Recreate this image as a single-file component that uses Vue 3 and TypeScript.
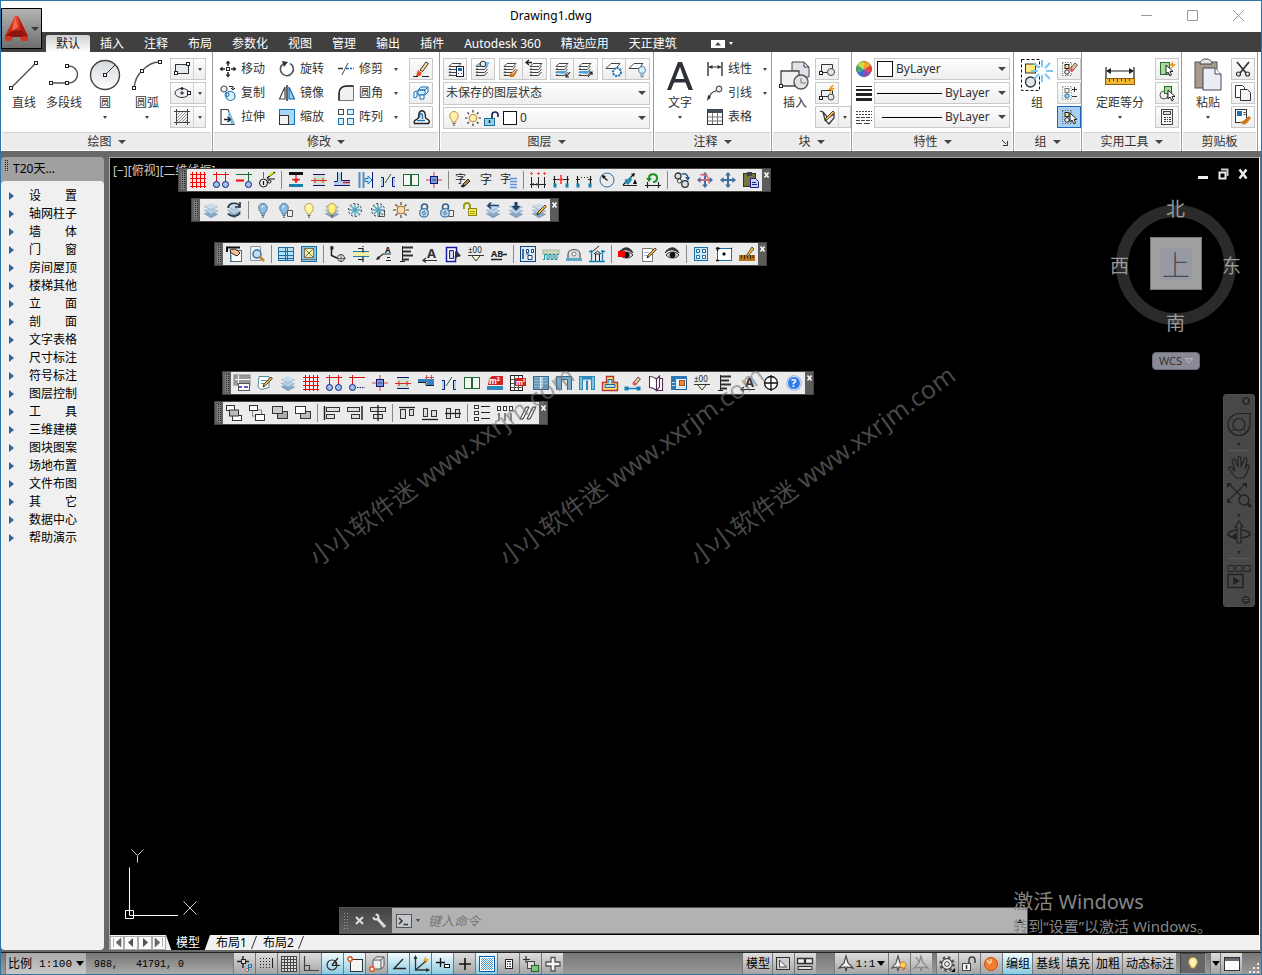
<script setup lang="ts">
import { h, ref } from 'vue'

const P = (d: string, s = '#333', f = 'none', w = 1) =>
  `<path d="${d}" stroke="${s}" fill="${f}" stroke-width="${w}"/>`
const F = (d: string, f = '#333') => `<path d="${d}" fill="${f}"/>`
const C = (x: number, y: number, r: number, s = '#333', f = 'none', w = 1) =>
  `<circle cx="${x}" cy="${y}" r="${r}" stroke="${s}" fill="${f}" stroke-width="${w}"/>`
const R = (x: number, y: number, w: number, hh: number, s = '#333', f = 'none') =>
  `<rect x="${x}" y="${y}" width="${w}" height="${hh}" stroke="${s}" fill="${f}"/>`
const T = (x: number, y: number, t: string, size = 12, f = '#222', wt = 400) =>
  `<text x="${x}" y="${y}" font-size="${size}" font-weight="${wt}" fill="${f}">${t}</text>`
const H = (x: number, y: number) => R(x - 1.5, y - 1.5, 3, 3, '#222', '#fff')

const navy = '#141478'
const sky = '#a9d4f5'
const stack = (a = '#b7cfe3', b = '#8aa9c6') =>
  F('M1 11.5l7-2.5 7 3-7 4z', b) + P('M1 11.5l7 4 7-3.5', '#6f8dab', 'none', 0.6) +
  F('M1 8l7-2.5 7 3-7 4z', a) + P('M1 8l7 4.5 7-4', '#6f8dab', 'none', 0.6) +
  F('M1 4l7-3 7 3.5-7 4z', '#c9dcec') + P('M1 4l7 4 7-3.5', '#7d9ab6', 'none', 0.6)
const bulb = (f: string, s: string, x = 0) =>
  `<g transform="translate(${x} 0)">` + P('M6 10.5C2.5 8 3 1.5 8 1.5s5.5 6.5 2 9v1.5H6z', s, f) +
  P('M6.5 13.5h3M7 15.2h2', '#667', 'none', 1.2) + F('M6.5 4.5l1.5-1v3z', '#fff') + '</g>'
const sheets = (x = 0) =>
  `<g transform="translate(${x} 0)">` + P('M5 2.5h9l-3 3H2z', '#444', '#fff') +
  P('M3.5 7l-1.500 1.500h8.500l3-3.500M3.5 10l-1.500 1.500h8.500l3-3.500M3.5 13l-1.500 1.500h8.500l3-3.500', '#444') + '</g>'
const flake = (c = '#5aa5c0') =>
  P('M8 2v12M2 8h12M3.8 3.8l8.4 8.4M12.2 3.8l-8.4 8.4', c, 'none', 1.4) +
  `<circle cx="8" cy="8" r="6.5" fill="none" stroke="#333" stroke-dasharray="2 2"/>`
const lockA = C(8.5, 5, 3, '#345f8c', 'none', 1.6) + P('M4 9c0-3 8-3 8 0 1 5-1 6-4 6s-5-1-4-6z', '#345f8c', '#b5d5f0') + P('M6 11l3-2M7 13l3-2', '#345f8c')
const page = P('M9.5 8.5h5v6h-5z', '#555', '#eee')
const eye = P('M2 9c3-4 10-4 13 0-3 4-10 4-13 0z', '#333', '#ccc') + C(8.5, 9, 2.5, '#000', '#111') + P('M1 7c4-5 11-4 14 0M2 5c4-3 9-3 12 0M4 3.5c3-2 6-2 8 0', '#333', 'none', 1.2)
const pencil = P('M6 12l1-3 7-7 1.5 1.5-7 7z', '#543', '#f0b83c') + F('M6 12l.7-2 1.300 1.300z', '#222')
const eraser = P('M8 8l5-6 2.5 2-5 6z', '#654', '#e8c49a') + F('M7 9l2-2.5 3 2.5-2 2z', '#e55')
const arrow4 = (c: string) => P('M8 2.5v11M2.5 8h11', c, 'none', 2) +
  F('M8 0l3 3.5H5zM8 16l3-3.5H5zM0 8l3.5-3v6zM16 8l-3.5-3v6z', c)
const win = (c = '#1d6ea3') => R(1.5, 1.5, 13, 13, c, '#cfe9f8')
const cursorP = (x: number, y: number) =>
  `<g transform="translate(${x} ${y})">` + P('M0 0v9l2-2 2 4 1.5-1-1.500-3.500h3z', '#222', '#fff') + '</g>'
const selBox = `<rect x="1.5" y="1.5" width="9" height="13" fill="none" stroke="#555" stroke-dasharray="1 1.5"/>` + R(4, 3.5, 4, 4, '#222', '#ffe48a') + C(6, 11, 2.2, '#222', '#fff')

const icons: Record<string, string> = {
  line: P('M5 29L29 5', '#555', 'none', 1.5) + H(29, 5) + H(4, 30),
  pline: P('M4 25h18a8.5 8.5 0 0 0 0-17h-2', '#555', 'none', 1.5) + H(4, 25) + H(20, 25) + H(20, 8),
  circle: C(17, 17, 14.5, '#444', 'url(#ball)', 1.4) + P('M17 17L27 7', '#333') + H(17, 17),
  arc: P('M4 30C5 22 7 17 12 13 17 7 23 4 30 4', '#555', 'none', 1.5) + H(4, 30) + H(12, 13) + H(30, 4),
  rectI: R(1.5, 3.5, 13, 9, '#333', '#e6e9ee') + H(14, 3) + H(2, 12),
  ellipse: `<ellipse cx="8" cy="8" rx="7" ry="4.5" fill="#eceff3" stroke="#333"/>` + P('M6 8h4M8 6v4', '#222') + H(15, 8) + C(8, 3.5, 1, '#222', '#222'),
  hatch: P('M2.5 0v16M13.5 0v16M0 2.5h16M0 13.5h16', '#444') + P('M3 6l3-3M3 9l6-6M3 12l9-9M5 13l8-8M8 13l5-5M11 13l2-2', '#777', 'none', .8),
  move: P('M8 1v4M8 11v4M1 8h4M11 8h4', '#222', 'none', 1.5) + F('M8-.5l2.5 3h-5zM8 16.5l2.5-3h-5zM-.5 8l3-2.5v5zM16.5 8l-3-2.5v5z', '#222') + R(6.5, 6.5, 3, 3, '#222', '#fff'),
  rotate: P('M11 2.500a6.500 6.500 0 1 1-7 .500', '#555', 'none', 1.6) + F('M3 0l6 1-4 5z', '#333'),
  trim: P('M8 7.5h8', '#0b6ab8', 'none', 1.5) + F('M11 6h1v3h-1zM14 6h1v3h-1z', '#fff') + P('M4 14l6-12', '#444') + P('M0 7.5h5', '#333', 'none', 1.5),
  copy: C(4, 4, 3, '#555', '#f3f3f3', 1.2) + C(10.5, 11, 4.5, '#1673b5', '#dff0fb', 1.2) + P('M9 1.5h4v3M11 3l2 2 2-2', '#222') + C(7, 9.5, 2, '#1673b5'),
  mirror: P('M6 2v12H.5z', '#444', '#fff', 1.2) + P('M10 2v12h5.5z', '#0b6ab8', '#9fd0f2', 1.2) + P('M8 0v16', '#222', 'none', 1.4),
  fillet: P('M1 15.5V9Q1 1 9 1h6.5v14.5z', '#777', '#eef0f2') + P('M1 15.5V9Q1 1 9 1h6.5', '#222', 'none', 1.5),
  stretch: P('M1 .5h7l6 15H1z', '#444', '#fff', 1.2) + F('M9 1l6 14h-4L8 6z', '#7cc0ea') + P('M4 10.5h6M7.5 8l3 2.5-3 2.5', '#222', 'none', 1.4),
  scale: R(.5, .5, 15, 15, '#1673b5', '#a8d8f4') + R(.5, 6.5, 9, 9, '#333', '#f3f3f3'),
  array: R(.5, .5, 5, 5, '#444', '#fff') + R(9.5, .5, 6, 5, '#1673b5', '#d8eefb') + R(.5, 9.5, 5, 6, '#1673b5', '#d8eefb') + R(9.5, 9.5, 6, 6, '#1673b5', '#d8eefb'),
  brush: P('M7 9l6-8 2.5 1.5-6 8z', '#432', '#f3d9a2') + F('M5 9l4 3-2 3H3z', '#e2521c') + P('M0 15.5h5M9 15.5h7', '#222'),
  explode: P('M5 5l3-3h7l-3 3zM5 5h7v5H5zM15 2v5l-3 3', '#1673b5', '#d8eefb') + P('M1 7l3-1v6l-3 1zM7 10h4v4H7z', '#1673b5', '#fff'),
  offset: P('M1.500 14.500c-2-4 4-4 4-6 0-9 7-9 7 0 0 2 6 2 3 6z', '#222', '#fff', 1.4) + P('M4 11.5h8M6.5 9V7c0-3 3-3 3 0v3', '#1673b5', 'none', 1.5),
  layProp: sheets() + R(9.5, 5.5, 7, 10, '#223', '#fff') + F('M11 7h4v3h-4zM11 12h1v1h-1zM14 12h1v1h-1z', '#0b6ab8'),
  layOff: sheets() + F('M3 5l4-4h9l-3 5z', '#7cc0ea') + C(9, 3, 2.8, '#333', '#dff0fb'),
  layPaint: sheets() + F('M8 12l3 1 4-5 1 1-3 5c-1 3-4 2-5 2z', '#d07820'),
  layPrev: sheets(2) + P('M0 1.5h6M3-1L0 1.5 3 4', '#222', 'none', 1.3),
  layIso: sheets() + F('M2 12l2-2h9l-3 3z', '#4aa3dc') + P('M16 11l-4 5M12 13v3h3', '#222', 'none', 1.2),
  layUn: sheets() + F('M2 12l2-2h9l-3 3z', '#4aa3dc') + P('M11 16l4-5M12 11h3v3', '#222', 'none', 1.2),
  layFrz: P('M5 2.5h9l-4 5H0z', '#444', '#fff') + `<circle cx="11" cy="11" r="4" fill="#d8eefb" stroke="#1673b5" stroke-width="2" stroke-dasharray="2 1"/>` + C(11, 11, 2, '#fff', '#fff'),
  layBulb: P('M5 2.5h9l-4 5H0z', '#444', '#fff') + C(13, 9, 3.5, '#5c87a8', '#d8eefb') + P('M12 13v3h2v-3', '#5c87a8'),
  bulbY: bulb('#ffeeaa', '#b89a3e'),
  sunY: C(8, 8, 3.8, '#a8872c', '#ffeeb0') + P('M8 0v2.5M8 13.5V16M0 8h2.5M13.5 8H16M2.5 2.5l1.5 1.5M12 12l1.5 1.5M13.5 2.5L12 4M4 12l-1.500 1.500', '#333', 'none', 1.2),
  unlock: R(.5, 8.5, 10, 7, '#1f6f95', '#8fd0ea') + P('M8 8V5c0-4 6-4 6 0v2', '#225', 'none', 1.7) + P('M5.5 10v3', '#123', 'none', 1.5),
  textA: F('M1 32L12 4h4l11 28h-4.500l-3-7.500H8L5 32zM9.300 21h9L14 9z', '#2e3238'),
  dim: P('M1 1v14M15 1v14', '#333', 'none', 1.4) + P('M2 6h12', '#333') + F('M1.5 6l4-2v4zM14.5 6l-4-2v4z', '#333'),
  leader: P('M2 14Q3 7 9 6', '#333', 'none', 1.2) + C(12, 4, 2.8, '#555', '#eee', 1.2) + F('M0 16l1-6 3 2z', '#333'),
  table: R(.5, .5, 15, 15, '#333', '#fff') + F('M0 0h16v4H0z', '#444b55') + P('M1 8h14M1 12h14M5.5 4v11M10.5 4v11', '#777'),
  insert: P('M14 4h12l5 5v10H14z', '#444', '#dfe3e8') + P('M26 4v5h5', '#444') + P('M3 13h18v15H3z', '#444', '#eef0f2', 1.3) + C(23, 24, 7, '#555', '#dfe2e6', 1.4) + P('M23 20v5h5', '#777') + H(3, 28),
  blkNew: P('M2.5 3.5h11v8h-11z', '#333', '#eef0f2') + C(12, 11, 3.5, '#444', '#e4e7ea') + H(2, 12),
  blkEdit: P('M2.5 5.5h11v6h-11z', '#333', '#eef0f2') + C(12, 12, 3, '#444', '#e4e7ea') + F('M13 0l-4 5h3l-2 4 6-6h-3l2-3z', '#f39a1f') + H(2, 13),
  blkAttr: P('M1 2l3 1 2 8 4 4 5-6V5L9 9 4 3', '#333', '#eef0f2', 1.2) + pencil,
  wheel: C(8, 8, 7.5, '#555', '#fff') + F('M8 8V.5a7.5 7.5 0 0 1 6.500 3.700z', '#f5a623') + F('M8 8l6.500-3.800a7.500 7.500 0 0 1 0 7.500z', '#e8432e') + F('M8 8l6.500 3.700A7.500 7.500 0 0 1 8 15.500z', '#8c4bb5') + F('M8 8v7.500a7.500 7.500 0 0 1-6.500-3.800z', '#3b6fd4') + F('M8 8l-6.500 3.700a7.500 7.500 0 0 1 0-7.500z', '#3aae62') + F('M8 8L1.500 4.200A7.500 7.500 0 0 1 8 .500z', '#c9d83e'),
  weight: F('M0 1h16v1H0zM0 4h16v2H0zM0 8h16v3H0zM0 13h16v3H0z', '#222'),
  ltype: `<path d="M0 2.5h16M0 5.5h16" stroke="#444" stroke-dasharray="2 1"/><path d="M0 8.5h16M0 11.5h16" stroke="#444" stroke-dasharray="4 1"/><path d="M0 14.5h16" stroke="#444" stroke-dasharray="6 2"/>`,
  group: `<rect x="1.5" y="1.5" width="18" height="31" fill="none" stroke="#111" stroke-dasharray="3 2"/>` + R(5.5, 6, 10, 9, '#333', '#ffe980') + C(10.5, 24, 5, '#333', '#dfe8ee', 1.3) + P('M22 2v22M11 13h22M14 5l16 16M30 5L14 21', '#7cc4f2', 'none', 2) + C(22, 13, 4, '#dff2ff', '#fff'),
  grpEdit: selBox + `<g transform="translate(1 0)">${eraser}</g>`,
  grpAdd: `<rect x="1.5" y="1.5" width="9" height="13" fill="none" stroke="#888" stroke-dasharray="1 1.5"/>` + R(4, 3.5, 4, 4, '#777', '#eee') + C(6, 11, 2.2, '#1673b5', '#9fd0f2') + P('M11 4.5h5M13.5 2v5M11 11.5h5', '#333'),
  grpSel: selBox + cursorP(9, 4),
  measure: P('M3 9v11M31 9v11', '#222', 'none', 1.2) + P('M4 13h26', '#222') + F('M3 13l5-3v6zM31 13l-5-3v6z', '#222') + R(2.5, 20.5, 29, 6, '#8a5c10', '#f4b932') + P('M6.5 21v3M10.5 21v2M14.5 21v3M18.5 21v2M22.5 21v3M26.5 21v2', '#6b450a'),
  qsel: R(1.5, 1.5, 9, 12, '#2c6b2c', '#a9dba0') + F('M14 0l-4 5h3l-2 4 6-6h-3z', '#f39a1f') + cursorP(7, 4),
  qsel2: C(5, 10, 4, '#555', '#eee') + R(5.5, 1.5, 7, 7, '#2c6b2c', '#a9dba0') + cursorP(9, 5),
  calc: R(2.5, .5, 11, 15, '#444', '#f5f5f5') + R(4.5, 2.5, 7, 3, '#444', '#ddd') + F('M5 8h2v1H5zM8 8h1v1H8zM10 8h2v1h-2zM5 10h2v1H5zM8 10h1v1H8zM10 10h2v1h-2zM5 12h2v1H5zM8 12h1v1H8zM10 12h2v1h-2z', '#333'),
  paste: R(4, 4, 22, 26, '#5b5148', '#a89a8c') + P('M9 6c0-4 3-4 4-5h4c1 1 4 1 4 5z', '#444', '#e4e4e4') + P('M12 10h12l6 6v16H12z', '#445', '#e9eef6') + P('M24 10v6h6', '#445', '#fff'),
  cut: P('M2 1l9 11M14 1L5 12', '#333', 'none', 1.7) + C(3.5, 13, 2, '#333', 'none', 1.2) + C(12.5, 13, 2, '#333', 'none', 1.2),
  copyc: P('M.5 .5h7l2 2v10h-9z', '#333', '#fff') + P('M5.5 4.5h7l3 3v8h-10z', '#333', '#f3f5f8'),
  match: R(.5, .5, 11, 13, '#333', '#fff') + F('M2 2h5v5H2z', '#1673b5') + P('M8.5 3.5h2M8.5 5.5h2', '#333') + F('M5 13l3-1 6-5 2 2-4 5c-2 2-5 2-7-1z', '#d07820'),
  caret: R(.5, 1.5, 13, 7, '#fff', '#fff') + F('M4 6.5h6l-3-3.5z', '#444'),

  grid: P('M2.5 0v16M6.5 0v16M10.5 0v16M14.5 0v16M0 2.5h16M0 6.5h16M0 10.5h16M0 14.5h16', '#ff0000'),
  axis2: P('M0 2.5h16M3.5 0v9M12.5 0v9', '#d11') + C(3.5, 12.5, 3, navy, '#9cc6f2') + C(12.5, 12.5, 3, navy, '#9cc6f2'),
  axis1: P('M0 2.5h16', '#1b6b32') + P('M0 8.5h8', '#f00', 'none', 2) + P('M12.5 0v9', '#1b6b32') + C(12.5, 12.5, 3, navy, '#9cc6f2'),
  axisK: P('M4.5 0v6', '#0a0') + C(4.5, 11, 4, '#111') + P('M4.5 9v4M8 6l8-6M8 7h8', '#111', 'none', 1.2) + P('M10 3.5l4-3', '#ee0', 'none', 2) + C(10.5, 9.5, 1.5, '#111'),
  wallH: F('M1 0h14v3H1z', '#111') + F('M1 12h14v3H1z', '#1680b0') + P('M8 3v8M4 7.5h8', '#e22', 'none', 1.3) + F('M5 7h6l-3 4z', '#e22'),
  wallM: P('M2 2.5h12M2 13.5h12', navy) + F('M2 3h12v10H2z', '#cfe0cf') + P('M0 8.5h16M4 6v5M12 6v5', '#d22'),
  wallL: F('M4 1h4v8h8v5H0V9h4z', '#b4d0ea') + P('M3.5 0v9.5H0M7.5 0v8.5H16M0 13.5h16', navy) + P('M9 10.5h7', '#c22', 'none', 1.5),
  wallO: P('M2.5 0v16M6.5 0v16', '#5b8cb5', 'none', 2) + P('M15.5 0v16', navy) + P('M8 6.5h3V4l4 4-4 4V9.5H8z', '#1a80c4', '#bfe6fb'),
  wallB: P('M1 5.5h2.5v9H1M15 5.5h-2.500v9H15', navy, sky) + P('M5 11l6-9', '#1b6b32'),
  doorP: R(.5, 2.5, 15, 11, '#246b34', '#f4f8f4') + P('M8 3v10', '#246b34', 'none', 2),
  column: P('M0 8h16M8 0v16', '#c44') + R(4.5, 4.5, 7, 7, navy, '#7b9ad8') + P('M6 8h4', '#446'),
  charB: T(0, 11, '字', 11) + P('M8 12l5-5 2 2-5 5z', '#432', '#b08050') + F('M6 15c0-3 2-3 3-2l1 1c-1 2-3 1-4 1z', '#222'),
  charA: T(2, 12, '字', 12),
  charT: T(-1, 11, '字', 11) + P('M9 6.5h7M9 9.5h7M9 12.5h7M9 15.5h7', '#5a93d8', 'none', 1.6),
  dim3: P('M1.5 5v11M8.5 5v11M14.5 5v11M0 12.5h16', '#222') + P('M1.5 0v3M8.5 0v3M14.5 0v3M0 1.5h3M7 1.5h3M13 1.5h3', '#e33', 'none', .8) + F('M2 12l2-1v3zM8 12l-2-1v3z'),
  dimR: P('M1.5 4v8M14.5 4v8M0 7.5h16', '#222', 'none', 1.2) + P('M8 3v9M5.5 7.5h5', '#e33', 'none', 1.5) + R(1, 12, 2, 3, '#1680b0', '#1680b0') + R(13, 12, 2, 3, '#1680b0', '#1680b0'),
  dimD: P('M1.5 4v8M14.5 4v8M0 7.5h4M12 7.5h4', '#222', 'none', 1.2) + P('M5 5.5h1M8 5.5h1M11 5.5h1', '#222') + R(1, 12, 2, 3, '#1680b0', '#1680b0') + R(13, 12, 2, 3, '#1680b0', '#1680b0'),
  dimC: C(8, 8, 7, '#35699a') + P('M8.5 8.5L3.5 4', '#111', 'none', 1.2) + F('M3 3l4 1-3 3z', '#111'),
  dimA: P('M1 13.5h14M1 13L11 3M3 8h6', '#222', 'none', 1.2) + F('M2 10l7-5 1 3-4 5z', '#2590b5') + F('M13 7l2 5h-4zM9 2l4-1-1 4z', '#111'),
  dimU: P('M2.5 10v6M13.5 10v6M0 13.5h16', '#222', 'none', 1.2) + P('M4 6C4 1 12 1 12 6c0 3-2 4-4 4', '#1a9020', 'none', 2) + F('M1 6h6L4 10z', '#1a9020'),
  objCopy: C(4, 4, 3, '#333', '#d6dde3', 1.3) + C(5.5, 9, 2, '#333', '#fff') + C(11, 12, 3.3, '#333', '#d6dde3', 1.3) + P('M8 2c4-1 6 1 6 5', '#2a5c94', 'none', 1.5) + F('M11 5h5l-2 4z', '#2a5c94'),
  moveR: arrow4('#3c6fa6') + P('M3 3c6-2 10 3 9 9M3 8h9', '#e66', 'none', 1.3),
  moveB: arrow4('#3c6fa6'),
  clip: R(.5, 1.5, 12, 13, '#333', '#77773c') + F('M4 0h5v4H4z', '#444') + P('M7.5 6.5h5l3 3v6h-8z', '#228', '#c9d4f2') + P('M9 10.5h4M9 12.5h5', '#228'),

  lay: stack(),
  layRef: stack() + P('M2 6c1-6 9-6 12-2M14 0v5H9M14 10c-2 5-9 5-12 2', '#234', 'none', 1.6),
  bulbB: bulb('#8dbcdf', '#4b7aa0'),
  bulbBP: page + bulb('#8dbcdf', '#4b7aa0', -2),
  bulbT: bulb('#fff3a0', '#b5a642'),
  bulbL: stack() + bulb('#ffec80', '#b5a642'),
  frz: flake(), frzP: page + flake(),
  sunO: C(8, 8, 4, '#a66b35', '#ffd9a8') + P('M8 0v3M8 13v3M0 8h3M13 8h3M2.5 2.5l2 2M11.5 11.5l2 2M13.5 2.5l-2 2M4.5 11.5l-2 2', '#543', 'none', 1.2),
  lockB: lockA, lockBP: page + `<g transform="translate(-2 0)">${lockA}</g>`,
  lockY: P('M2 7V4c0-4 6-4 6 0v4', '#a09a10', 'none', 2) + R(6.5, 6.5, 8, 7, '#8a8410', '#f2ec4c') + P('M8 9.5h5M8 11.5h5', '#a09a10'),
  layBack: stack() + P('M3 3.5h11M6 .5l-3 3 3 3', '#23406a', 'none', 1.7),
  layDown: stack() + F('M6.5 0h3v4h3L8 9 3.5 4h3z', '#23406a'),
  layPen: stack() + `<g transform="translate(0 1)">${pencil}</g>`,

  hand: R(4.5, 4.5, 11, 11, '#567', '#fff') + P('M1 1v5M0 1.5h14', '#111', 'none', 2) + P('M4 4c4-2 8 0 10 3l-3 3-6-3z', '#321', '#f0c49a') + P('M5 9v6', '#1680b0'),
  zoomD: P('M1.5 .5h10v14h-10z', '#89a', '#eaf1f8') + C(8, 8, 4, '#4a6f94', '#c4dff2', 1.5) + P('M11 11l4 4', '#c98432', 'none', 2.5),
  winA: R(.5, 1.5, 15, 13, '#1d6ea3', '#b9dff2') + P('M7.5 1v14M9.5 1v14M1 5.5h14M1 9.5h14M1 12.5h14', '#1d6ea3'),
  winB: R(.5, .5, 15, 15, '#1d6ea3', '#8cc4e0') + R(3.5, 2.5, 9, 9, '#776', '#f6efa0') + P('M4 3l8 8M12 3l-8 8M1 13.5h14', '#776'),
  leadN: P('M1.5 0v9.5L7 12', '#222', 'none', 1.5) + C(11, 12, 3.5, '#444') + P('M7 12.5h9M11 8v8', '#444', 'none', .8) + R(1, 1, 2, 2, '#222', '#222'),
  sect: F('M0 6h16v4H0z', '#f2eda0') + P('M0 5.5h16M0 10.5h16', '#1680b0') + P('M5 2.5h5v4M10 1V0M5 13.5h5v-3M10 14v2', '#222', 'none', 1.2),
  leadA: P('M1 13l6-5h8', '#222', 'none', 1.2) + F('M0 14l2-4 2 3z', '#222') + T(9, 7, 'A', 8, '#222', 700) + P('M11 11.5h3M10 14.5h5', '#222'),
  comb: P('M3.5 0v16M1 15.5h5', '#222') + P('M4 1.5h10M4 5.5h8M4 9.5h10M4 13.5h6', '#333', 'none', 1.8),
  textL: T(5, 12, 'A', 13, '#333', 700) + P('M1 14.5h14M4 12l-3 2.5 3 2', '#333', 'none', 1.2),
  bookL: P('M1.5 1.5h10v4l3 4-4 1v5h-9z', '#1a1aa0', '#fff', 1.5) + P('M4.5 4.5h4v8h-4z', '#1a1aa0', '#cfd6f8') + F('M10 5l6 5-4 1-2 4z', '#333'),
  level: T(0, 7, '±00', 8) + P('M0 9.5h16M4 10l4 5 4-5', '#333', '#fff3d8'),
  abM: T(0, 11, 'AB', 9, '#222', 700) + P('M0 13.5h11M12 8.5h4', '#222', 'none', 1.3),
  bldA: R(.5, .5, 15, 15, '#15457a', '#dceaf8') + P('M3 3v10', '#15457a', 'none', 1.5) + P('M6.5 3.5h2v3h-2zM11.5 3.5h2v3h-2zM8 9.5h4v4H8zM6 8h3', '#15457a', '#fff'),
  wave: R(0, 4, 16, 4, '#aab59a', '#cfd8ba') + P('M0 13.5h1.5v-5h2.5v5h2v-5h2v5h2v-5h2v5h2v-5h2', '#1a8d9c'),
  oven: P('M2 12V8c0-6 12-6 12 0v4', '#555', '#ddd', 1.2) + C(8, 8, 2, '#777', '#fff') + F('M0 12h16v3H0z', '#5fa7c7'),
  house: P('M2.5 4v12M13.5 4v12M0 15.5h16M0 5.5h4M12 5.5h4', '#1680b0', 'none', 1.3) + P('M6.5 15V8h4v7M5 8l3.5-3 3.5 3M4 5l6-5', '#222'),
  eyeR: eye + F('M0 5h7v6H0z', '#f00'), eyeB: eye,
  note: P('M1.5 2.5h10v13h-10z', '#777', '#fff') + P('M3 6.5h5M3 9.5h4', '#9bd') + pencil,
  fourW: win() + P('M3.5 3.5h3v3h-3zM9.5 3.5h3v3h-3zM3.5 9.5h3v3h-3zM9.5 9.5h3v3h-3z', '#1d6ea3', '#fff'),
  ucsW: R(1.5, 2.5, 14, 12, '#1d6ea3', '#fff') + P('M0 2.5h4M1.5 1v4M15 2.5h1M0 14.5h3', '#111', 'none', 1.5) + F('M8 6l2 2-2 2-2-2z', '#111'),
  ruler: F('M0 9h16v6H0z', '#b5731c') + P('M2.5 9v3M5.5 9v4M8.5 9v3M11.5 9v4M14 9v3', '#3d2508') + P('M7 10l6-9 2 2-6 7z', '#653', '#f4bb3a'),

  prop: R(0, 0, 16, 10, '#888', '#999') + P('M4.5 0v9M1 4.5h15', '#fff') + R(4.5, 8.5, 11, 7, '#555', '#fff') + P('M5 12h3M10 12h4', '#22d', 'none', 1.5),
  edit: P('M2 1.5h10v11l-8 2L1 12z', '#589', '#fff') + P('M4 5.5h6M4 8.5h4', '#49a', 'none', 1.2) + pencil,
  axisD: P('M0 2.5h16M3.5 0v9', '#d11') + C(3.5, 12.5, 3, navy, '#9cc6f2') + `<path d="M8 12.5h8" stroke="#228" stroke-dasharray="1.5 1"/>`,
  beam: F('M0 4h16v6h-7V7H0z', '#3a7fc0') + P('M0 7.5h8v3h8', '#123') + P('M7 2.5h9M8.5 0v4M13.5 0v4', '#d22', 'none', .8),
  m2: F('M2 4l3-3h11v9H1z', '#d22222') + T(2, 9, 'm²', 8, '#fff', 700) + F('M0 11h16v4H0z', '#2f87c0'),
  m2t: R(.5, .5, 12, 15, '#222', '#fff') + P('M1 4.5h12M1 8.5h12M1 12.5h12M4.5 1v14M8.5 1v14', '#555') + F('M5 3h11v8H5z', '#d22222') + T(6, 10, 'm²', 7, '#fff', 700),
  cols: F('M0 1h16v14H0z', '#86b6d2') + P('M1 4h14M1 7h14M1 10h14M1 13h14', '#4f83a4') + P('M7.5 1v14M9 1v14', '#fff', 'none', .8) + R(.5, 1.5, 15, 13, '#336a8c'),
  door1: F('M0 1h16v3H0zM0 4h5v11H0zM12 4h4v11h-4z', '#78acc9') + P('M.5 15V1.5h15V15M5.5 15V4.5h6V15', '#336a8c'),
  door2: F('M0 1h16v14h-4V5H9v10H7V5H4v10H0z', '#2d8ab8') + P('M4 5h8M2 2v12M14 2v12', '#bfe3f3', 'none', 1.2),
  stamp: P('M.5 15.5v-8h4v-6h7v6h4v8z', '#b33', '#ffe36b', 1.4) + P('M6 8.500v-4h4v4M3 9.500h10v3H3z', '#23639a', '#bfe0f3'),
  erase: P('M1 13.5h14', '#1680d0', 'none', 1.5) + R(0, 12, 3, 3, '#1680b0', '#1680b0') + R(12, 12, 3, 3, '#1680b0', '#1680b0') + eraser,
  book: P('M1.5 1.5v11c3 0 5 1 7 3V4c-2-2-4-2.500-7-2.500zM8.500 4l3-3v11l-3 3.500M11.500 3.500h3v12h-6', '#512b52', '#fff', 1.1),
  sched: R(.5, 1.5, 15, 13, '#1d5a96', '#e9f3fb') + F('M0 1h16v3H0zM0 4h5v11H0z', '#2f78b8') + R(8.5, 5.5, 5, 5, '#a34d14', '#f28a32') + P('M1 7.5h3M1 10.5h3M6 12.5h9', '#bfe0f3'),
  cross: C(8, 8, 6.5, '#111', '#fff', 1.3) + P('M8 0v16M1 8h14', '#111', 'none', 1.3),
  help: C(8, 8, 7.5, '#b7c4dc', '#2f7be8') + C(8, 8, 6.5, '#e8f0ff') + T(5, 12, '?', 11, '#fff', 700),

  ord1: R(.5, .5, 8, 5, '#333', '#fff') + R(6.5, 10.5, 9, 5, '#333', '#fff') + R(3.5, 5, 9, 6, '#333', '#bbb'),
  ord2: R(3.5, 5, 9, 6, '#888', '#eee') + R(.5, .5, 8, 5, '#333', '#fff') + R(6.5, 9.5, 9, 6, '#333', '#fff'),
  ord3: R(5.5, 6.5, 10, 7, '#333', '#aaa') + R(.5, 1.5, 10, 7, '#333', '#ccc'),
  ord4: R(5.5, 6.5, 10, 7, '#333', '#bbb') + R(.5, 1.5, 10, 7, '#333', '#fff'),
  alL: P('M.5 1v14', '#222', 'none', 1.5) + R(2.5, 2.5, 13, 4, '#333', '#ddd') + R(2.5, 9.5, 8, 4, '#333', '#ddd'),
  alR: P('M15 1v14', '#222', 'none', 1.5) + R(.5, 2.5, 12, 4, '#333', '#ddd') + R(4.5, 9.5, 8, 4, '#333', '#ddd'),
  alC: R(.5, 2.5, 15, 4, '#333', '#ddd') + R(3.5, 9.5, 9, 4, '#333', '#ddd') + P('M8 0v16', '#222', 'none', 1.3),
  alT: P('M0 2.5h16', '#222', 'none', 1.3) + R(1.5, 4.5, 5, 9, '#333', '#ddd') + R(10.5, 4.5, 4, 6, '#333', '#ddd'),
  alB: P('M0 14.5h16', '#222', 'none', 1.3) + R(1.5, 3.5, 4, 8, '#333', '#ddd') + R(9.5, 5.5, 5, 6, '#333', '#ddd'),
  alM: R(1.5, 3.5, 4, 10, '#333', '#ddd') + R(10.5, 4.5, 4, 8, '#333', '#ddd') + P('M0 8.5h16', '#222', 'none', 1.3),
  disV: R(.5, .5, 4, 3, '#333', '#fff') + R(.5, 6.5, 4, 3, '#333', '#fff') + R(.5, 12.5, 4, 3, '#333', '#fff') + P('M7 1.5h9M7 7.5h9M7 13.5h9', '#222'),
  disH: R(.5, 1.5, 3, 4, '#333', '#fff') + R(6.5, 1.5, 3, 4, '#333', '#fff') + R(12.5, 1.5, 3, 4, '#333', '#fff') + P('M2 8v8M8 8v8M14 8v8', '#222'),
  slash: P('M0 14h3L9 2H6zM7 14h3l6-12h-3z', '#333', '#eee'),

  wheelN: P('M12 1.500h11v11a11 11 0 1 1-11-11z', '#222', 'none', 1.2) + C(12, 12.5, 6, '#222', 'none', 1.2) + P('M4 20l4-4M20 20l-4-4', '#222'),
  handN: P('M9 23L2 14c-1-2 1-3 3-1l3 3L5 6c0-2 2-3 3-1l3 7V3c0-2 3-2 3 0v9l3-8c1-2 3-1 3 1l-2 9 2-4c1-1 3 0 2 2l-3 8-3 3z', '#222', 'none', 1.2),
  zoomN: P('M2 1l16 16M18 1L1 18', '#222', 'none', 1.2) + F('M0 0h5L0 5zM20 0v5l-5-5zM0 20v-5l5 5z', '#222') + C(17, 17, 5, '#222', '#484848', 1.4) + P('M20 20l4 4', '#222', 'none', 3),
  orbitN: `<ellipse cx="12" cy="14" rx="11" ry="4" fill="none" stroke="#222" stroke-width="1.5"/>` + P('M10 23V7H8l4-6 4 6h-2v16z', '#222', '#484848', 1.2) + F('M3 17l6-4v7z', '#222'),
  showN: P('M1 2.5h6v6H1zM9 2.5h6v6H9zM17 2.5h6v6h-6z', '#222') + P('M1 11.5h15v13H1z', '#222', 'none', 1.4) + F('M6 14l7 4-7 4z', '#222'),

  sSnap: P('M6 0v12M0 5.5h12', '#222', 'none', 1.4) + R(4.5, 3.5, 4, 4, '#222', '#ddd') + C(10, 14, 1.5, '#d52', '#fff') + P('M11.5 15V8.5h3v3h-3', '#1673b5'),
  sDots: F('M1 2h1v1H1zM4 2h1v1H4zM7 2h1v1H7zM10 2h1v1h-1zM1 5h1v1H1zM4 5h1v1H4zM7 5h1v1H7zM10 5h1v1h-1zM1 8h1v1H1zM4 8h1v1H4zM7 8h1v1H7zM10 8h1v1h-1zM1 11h1v1H1zM4 11h1v1H4zM7 11h1v1H7zM10 11h1v1h-1zM13 2h1v10h-1z', '#222'),
  sGrid: R(.5, .5, 15, 15, '#444', '#ddd') + P('M3.5 0v16M6.5 0v16M9.5 0v16M12.5 0v16M0 3.5h16M0 6.5h16M0 9.5h16M0 12.5h16', '#444'),
  sOrtho: P('M1.5 0v14.5H16M1.5 9.5h5v5', '#444', 'none', 1.2),
  sPolar: C(7, 9, 5, '#333', 'none', 1.2) + P('M7 9.500h8M7 9l6-7M11 6v4', '#222', 'none', 1.2),
  sOsnap: R(3.5, 3.5, 12, 12, '#333', '#f4f4f4') + C(3, 3, 2.2, '#e05218', '#fff', 1.4),
  s3d: P('M4 4l3-3h8v9l-3 3H4zM4 4h8v9M12 4l3-3', '#555', '#eee') + C(3, 13, 2.2, '#e05218', '#fff', 1.4),
  sTrack: P('M12 3L3 12.500h12', '#222', 'none', 1.3),
  sUcs: P('M2.5 2v12H16M2.5 14L13 5', '#333', 'none', 1.3) + F('M2.5-1l2 4h-4zM17 14l-4-2v4z') + F('M13 0l-3 5h3l-2 4 5-6h-3z', '#f6a31c'),
  sDyn: P('M1 6.5h9M5.5 2v9', '#111', 'none', 1.3) + R(9.5, 8.5, 5, 3, '#111', '#fff'),
  sPlus: P('M2 8h12M8 2v12', '#111', 'none', 1.6),
  sTrans: R(.5, .5, 15, 15, '#0b5cad', '#fff') + `<path d="M2 3.5h12M2 5.5h12M2 7.5h12M2 9.5h12M2 11.5h12M2 13.5h12" stroke="#4a9bd8" stroke-dasharray="1 1"/><path d="M3 2.5h12M3 4.5h12M3 6.500h12M3 8.500h12M3 10.500h12M3 12.500h12" stroke="#4a9bd8" stroke-dasharray="1 1"/>`,
  sQp: R(4.5, 3.5, 7, 9, '#222', '#fff') + P('M6 5.5h4M6 8h1M8 8h2M6 10.500h1M8 10.500h2', '#222', 'none', 1),
  sSel: P('M3 0v7M0 3.5h7', '#333', 'none', 1.2) + R(4.5, 5.5, 7, 7, '#444', '#ddd') + R(8.5, 9.5, 7, 6, '#23632c', '#7fc47a'),
  sAdd: P('M6 1.5h4v4.500h5v4h-5v5H6v-5H1V6h5z', '#555', '#f6f6f6', 1.3),
  sMod: R(1.5, 1.5, 13, 12, '#333', '#ccc') + P('M4.500 4v7h7z', '#444', '#fff'),
  sLay: P('M.5 2.5h7v5h-7zM8.500 2.500h7v5h-7z', '#333', '#eee', 1.3) + P('M1 10.5h14v3H1z', '#333', '#ddd'),
  sAnn: P('M8 0l2 7 5 5-6-1-1 4-1-4-6 1 5-5z', '#444', '#f5f5f5', 1.2),
  sAnnS: P('M7 0l2 7 4 5-5-1-1 4-1-4-5 1 4-5z', '#555', '#f5f5f5', 1.2) + C(12, 9, 3, '#d98120', '#ffd45c') + F('M11 12h2v3h-2z', '#d98120'),
  sAnnG: P('M8 0l2 7 5 5-6-1-1 4-1-4-6 1 5-5zM3 1l3 5', '#888', '#c6c6c6', 1.2),
  sGear: `<circle cx="8" cy="8" r="6.5" fill="#fff" stroke="#555" stroke-width="2.500" stroke-dasharray="2.600 2.500"/>` + C(8, 8, 5.3, '#444', '#eee', 1.2) + C(8, 8, 2.3, '#333', '#fff') + F('M12 16h4v-4z', '#000'),
  sLock: R(1.5, 7.5, 8, 7, '#444', '#f2f2f2') + P('M8 7V4c0-4 6-4 6 0v3', '#444', 'none', 1.6) + P('M5.5 9v4', '#333', 'none', 1.5),
  sBall: C(8, 8, 6.5, '#c94c12', '#f08030') + P('M4 4l3 4M8 3v4', '#ffe0b5', 'none', 1.4),
  sFull: R(.5, 1.5, 15, 13, '#333', '#fff') + F('M1 2h14v3H1z', '#667'),
  wrench: P('M5 5l8 9', '#ddd', 'none', 3) + C(4, 4, 2.5, '#ddd', 'none', 2) + F('M0 0l4 0-1 4-3 0z', '#4c4c4c'),
  prompt: R(.5, 1.5, 15, 13, '#555', '#c4c8cc') + P('M3 5l3 3-3 3M7.5 11.5H12', '#333', 'none', 1.5),
  logo: `<defs><linearGradient id="red" x1="0" y1="0" x2="0" y2="1"><stop offset="0" stop-color="#e8452c"/><stop offset="1" stop-color="#b01a12"/></linearGradient></defs>` +
    F('M10 0h3l10 20-1 5h-5l-2-4H8l-3 4H1L0 20z', 'url(#red)') + F('M0 20l7-5 9-1 7 6-8 1H8l-4-1z', '#8e1410') + F('M13 0l10 20-7-6z', '#b3190f') + F('M10 0L7 15l6-4z', '#f2684b') + F('M0 20l4 0 3 1-2 4H1zM23 20l-8 1 2 4h5z', '#d8301f'),
}

const Icon = (p: { n: string; w?: number; h?: number }) => {
  const w = p.w ?? 16
  const hh = p.h ?? w
  return h('svg', { width: w, height: hh, viewBox: `0 0 ${w} ${hh}`, fill: 'none', 'aria-hidden': 'true', innerHTML: icons[p.n] ?? '' })
}
Icon.props = ['n', 'w', 'h']

const tabs = ['默认', '插入', '注释', '布局', '参数化', '视图', '管理', '输出', '插件', 'Autodesk 360', '精选应用', '天正建筑']
const activeTab = ref('默认')

const drawTools = [
  { t: '直线', i: 'line', m: false }, { t: '多段线', i: 'pline', m: false },
  { t: '圆', i: 'circle', m: true }, { t: '圆弧', i: 'arc', m: true },
]
const modify = [
  [['move', '移动'], ['rotate', '旋转'], ['trim', '修剪'], ['brush', '删除']],
  [['copy', '复制'], ['mirror', '镜像'], ['fillet', '圆角'], ['explode', '分解']],
  [['stretch', '拉伸'], ['scale', '缩放'], ['array', '阵列'], ['offset', '偏移']],
]
const layerTools = [['layProp'], ['layOff'], ['layPaint', 'layPrev'], ['layIso', 'layUn'], ['layFrz', 'layBulb']]
const notes = [{ i: 'dim', t: '线性', m: true }, { i: 'leader', t: '引线', m: true }, { i: 'table', t: '表格', m: false }]

const tree = ['设　　置', '轴网柱子', '墙　　体', '门　　窗', '房间屋顶', '楼梯其他', '立　　面', '剖　　面', '文字表格', '尺寸标注',
  '符号标注', '图层控制', '工　　具', '三维建模', '图块图案', '场地布置', '文件布图', '其　　它', '数据中心', '帮助演示']

const toolbars = [
  { x: 68, y: 10, items: 'grid axis2 axis1 axisK | wallH wallM wallL wallO wallB doorP column | charB charA charT | dim3 dimR dimD dimC dimA dimU | objCopy moveR moveB clip' },
  { x: 81, y: 40, items: 'lay layRef | bulbB bulbBP bulbT bulbL frz frzP sunO lockB lockBP lockY layBack layDown layPen' },
  { x: 104, y: 84, items: 'hand zoomD | winA winB | leadN sect leadA comb textL bookL level abM | bldA wave oven house | eyeR note eyeB | fourW ucsW ruler' },
  { x: 112, y: 213, items: 'prop edit lay grid axis2 axisD column wallM beam wallB doorP m2 m2t cols door1 door2 stamp erase book sched level comb textL cross help' },
  { x: 104, y: 243, items: 'ord1 ord2 ord3 ord4 | alL alR alC | alT alB alM | disV disH slash' },
].map(b => ({ ...b, items: b.items.split(' ') }))

const marks = [211, 401, 592]

const toggles = [
  ['sSnap', 0], ['sDots', 0], ['sGrid', 0], ['sOrtho', 0], ['sPolar', 1], ['sOsnap', 1], ['s3d', 0], ['sTrack', 1],
  ['sUcs', 1], ['sDyn', 1], ['sPlus', 0], ['sTrans', 1], ['sQp', 0], ['sSel', 0], ['sAdd', 0],
] as [string, number][]
const command = ref('')
</script>

<template>
  <div class="app">
    <svg class="defs" width="0" height="0" aria-hidden="true">
      <defs><linearGradient id="ball" x1="0" y1="0" x2="0" y2="1"><stop offset="0" stop-color="#d3d7de" /><stop offset="1" stop-color="#fff" /></linearGradient></defs>
    </svg>

    <header class="titlebar">
      <h1>Drawing1.dwg</h1>
      <div class="wctl">
        <button aria-label="最小化"><svg width="11" height="11"><path d="M0 5.5h11" stroke="#999" /></svg></button>
        <button aria-label="最大化"><svg width="11" height="11"><path d="M.5.5h10v10H.5z" stroke="#999" fill="none" /></svg></button>
        <button aria-label="关闭"><svg width="11" height="11"><path d="M0 0l11 11M11 0L0 11" stroke="#999" /></svg></button>
      </div>
      <button class="appbtn" aria-label="应用程序菜单"><Icon n="logo" :w="23" :h="26" /><i class="tri"></i></button>
    </header>

    <nav class="menubar">
      <button v-for="t in tabs" :key="t" :class="{ on: t === activeTab }" @click="activeTab = t">{{ t }}</button>
      <button class="mini" aria-label="显示选项"><Icon n="caret" :w="14" :h="10" /><i class="tri white"></i></button>
    </nav>

    <div class="ribbon">
      <section class="panel">
        <div class="body">
          <button v-for="d in drawTools" :key="d.t" class="big"><Icon :n="d.i" :w="34" /><span>{{ d.t }}</span><i v-if="d.m" class="tri"></i></button>
          <div class="col end inset">
            <div v-for="i in ['rectI', 'ellipse', 'hatch']" :key="i" class="split"><button :aria-label="i"><Icon :n="i" /></button><button aria-label="更多"><i class="tri"></i></button></div>
          </div>
        </div>
        <footer>绘图 <i class="tri lg"></i></footer>
      </section>

      <section class="panel">
        <div class="body">
          <div class="modgrid">
            <template v-for="(row, r) in modify" :key="r">
              <button v-for="(c, k) in row" :key="c[1]" :class="k === 3 ? 'sq' : 'flat'" :aria-label="c[1]">
                <Icon :n="c[0]" /><template v-if="k < 3"><span>{{ c[1] }}</span><i v-if="k === 2" class="tri far"></i></template>
              </button>
            </template>
          </div>
        </div>
        <footer>修改 <i class="tri lg"></i></footer>
      </section>

      <section class="panel">
        <div class="body">
          <div class="col wide">
            <div class="laytools">
              <div v-for="(g, k) in layerTools" :key="k" class="seg"><button v-for="i in g" :key="i" class="sq" :aria-label="i"><Icon :n="i" :w="17" :h="16" /></button></div>
            </div>
            <div class="combo"><select aria-label="图层状态"><option>未保存的图层状态</option></select><i class="tri lg"></i></div>
            <div class="combo"><Icon n="bulbY" /><Icon n="sunY" /><Icon n="unlock" /><b class="swatch"></b><select aria-label="图层"><option>0</option></select><i class="tri lg"></i></div>
          </div>
        </div>
        <footer>图层 <i class="tri lg"></i></footer>
      </section>

      <section class="panel">
        <div class="body">
          <button class="big note"><Icon n="textA" :w="28" :h="34" /><span>文字</span><i class="tri"></i></button>
          <div class="col">
            <button v-for="n in notes" :key="n.t" class="flat"><Icon :n="n.i" /><span>{{ n.t }}</span><i v-if="n.m" class="tri far"></i></button>
          </div>
        </div>
        <footer>注释 <i class="tri lg"></i></footer>
      </section>

      <section class="panel">
        <div class="body">
          <button class="big"><Icon n="insert" :w="34" /><span>插入</span></button>
          <div class="col">
            <button class="sq" aria-label="创建"><Icon n="blkNew" /></button>
            <button class="sq" aria-label="编辑"><Icon n="blkEdit" /></button>
            <div class="split"><button aria-label="编辑属性"><Icon n="blkAttr" /></button><button aria-label="更多"><i class="tri"></i></button></div>
          </div>
        </div>
        <footer>块 <i class="tri lg"></i></footer>
      </section>

      <section class="panel">
        <div class="body props">
          <div class="col wide">
            <div class="prow"><Icon n="wheel" /><div class="combo"><b class="swatch big-s"></b><select aria-label="颜色"><option>ByLayer</option></select><i class="tri lg"></i></div></div>
            <div class="prow"><Icon n="weight" /><div class="combo"><hr /><select class="r" aria-label="线宽"><option>ByLayer</option></select><i class="tri lg"></i></div></div>
            <div class="prow"><Icon n="ltype" /><div class="combo"><hr class="in" /><select class="r" aria-label="线型"><option>ByLayer</option></select><i class="tri lg"></i></div></div>
          </div>
        </div>
        <footer>特性 <i class="tri lg"></i><svg class="corner" width="6" height="6"><path d="M0 0l4 4M5.5 1v4.500H1" stroke="#333" fill="none" /></svg></footer>
      </section>

      <section class="panel">
        <div class="body">
          <button class="big"><Icon n="group" :w="34" /><span>组</span></button>
          <div class="col end">
            <button class="sq" aria-label="组编辑"><Icon n="grpEdit" /></button>
            <button class="sq" aria-label="添加到组"><Icon n="grpAdd" /></button>
            <button class="sq on" aria-label="启用组选择"><Icon n="grpSel" /></button>
          </div>
        </div>
        <footer>组 <i class="tri lg"></i></footer>
      </section>

      <section class="panel">
        <div class="body">
          <button class="big util"><Icon n="measure" :w="34" /><span>定距等分</span><i class="tri"></i></button>
          <div class="col end">
            <button v-for="i in ['qsel', 'qsel2', 'calc']" :key="i" class="sq" :aria-label="i"><Icon :n="i" /></button>
          </div>
        </div>
        <footer>实用工具 <i class="tri lg"></i></footer>
      </section>

      <section class="panel">
        <div class="body">
          <button class="big clipb"><Icon n="paste" :w="34" /><span>粘贴</span><i class="tri"></i></button>
          <div class="col end">
            <button v-for="i in ['cut', 'copyc', 'match']" :key="i" class="sq" :aria-label="i"><Icon :n="i" /></button>
          </div>
        </div>
        <footer>剪贴板</footer>
      </section>
    </div>

    <main class="work">
      <aside class="palette">
        <header><i class="grip"></i>T20天...</header>
        <ul>
          <li v-for="t in tree" :key="t"><button>{{ t }}</button></li>
        </ul>
      </aside>

      <div class="doc">
        <div class="canvas">
          <div class="viewlabel">[−][俯视][二维线框]</div>

          <div v-for="(b, k) in toolbars" :key="k" class="tb" :style="{ left: b.x + 'px', top: b.y + 'px' }">
            <i class="grip"></i>
            <div class="tbi">
              <template v-for="(i, j) in b.items" :key="j">
                <i v-if="i === '|'" class="sep"></i>
                <button v-else :aria-label="i"><Icon :n="i" /></button>
              </template>
            </div>
            <button class="x" aria-label="关闭"><svg width="5" height="6"><path d="M.5 .5l4 5M4.5 .5l-4 5" stroke="#fff" stroke-width="1.5" /></svg></button>
          </div>

          <span v-for="m in marks" :key="m" class="mark" :style="{ left: m + 'px' }">小小软件迷 www.xxrjm.com</span>

          <div class="docctl">
            <button aria-label="最小化"><svg width="11" height="12"><path d="M0 9.5h10" stroke="#eee" stroke-width="3" /></svg></button>
            <button aria-label="还原"><svg width="11" height="12"><path d="M1.5 4.5h6v6h-6z" stroke="#eee" stroke-width="2" fill="none" /><path d="M3 1.5h6.5V8" stroke="#ccc" stroke-width="2" fill="none" /></svg></button>
            <button aria-label="关闭"><svg width="11" height="12"><path d="M1.5 1.5l7 9M8.5 1.5l-7 9" stroke="#eee" stroke-width="2.5" /></svg></button>
          </div>

          <div class="cube">
            <b class="n">北</b><b class="w">西</b><b class="e">东</b><b class="s">南</b>
            <button class="face"><span>上</span></button>
          </div>
          <button class="wcs">WCS <svg width="8" height="6"><path d="M.5 .5h7L4 5z" stroke="#bbb" fill="none" /></svg></button>

          <div class="navbar">
            <button class="dot" aria-label="关闭">×</button>
            <button aria-label="控制盘"><Icon n="wheelN" :w="24" :h="25" /><i class="tri"></i></button>
            <hr />
            <button aria-label="平移"><Icon n="handN" :w="24" :h="25" /></button>
            <button aria-label="缩放"><Icon n="zoomN" :w="24" :h="25" /><i class="tri"></i></button>
            <button aria-label="动态观察"><Icon n="orbitN" :w="24" :h="25" /><i class="tri"></i></button>
            <hr />
            <button aria-label="运动"><Icon n="showN" :w="24" :h="26" /></button>
            <button class="dot bot" aria-label="自定义">=</button>
          </div>

          <svg class="ucs" width="76" height="74" fill="none" stroke="#fff">
            <path d="M7.5 19.5v43M11 67.5h45M3.5 62.5h8v8h-8zM7.5 62v5.5H12" />
            <path d="M9.5 1.5l6 6 6-6M15.5 7.5v7M61.5 53.5l13 13M74.5 53.5l-13 13" stroke="#ccc" />
          </svg>

          <div class="cmd">
            <i class="grip"></i>
            <button aria-label="关闭"><svg width="9" height="9"><path d="M1 1l7 7M8 1L1 8" stroke="#ddd" stroke-width="2" /></svg></button>
            <button aria-label="自定义"><Icon n="wrench" /></button>
            <label class="line"><Icon n="prompt" /><i class="tri"></i><input v-model="command" aria-label="命令" placeholder="键入命令" /><i class="up"></i></label>
          </div>
          <div class="activate"><p>激活 Windows</p><p>转到“设置”以激活 Windows。</p></div>
        </div>

        <div class="sheetbar">
          <button v-for="k in 4" :key="k" class="nav" :aria-label="'翻页' + k">
            <svg width="8" height="9"><path v-if="k === 1" d="M.5 0v9M8 0L3 4.5 8 9z" fill="#666" stroke="#666" stroke-width=".5" /><path v-if="k === 2" d="M6 0L1 4.5 6 9z" fill="#555" /><path v-if="k === 3" d="M2 0l5 4.5L2 9z" fill="#555" /><path v-if="k === 4" d="M7.5 0v9M0 0l5 4.5L0 9z" fill="#666" stroke="#666" stroke-width=".5" /></svg>
          </button>
          <button class="model">模型</button>
          <button>布局1</button><svg width="6" height="15"><path d="M5.5 1L.5 14" stroke="#333" /></svg>
          <button>布局2</button><svg width="6" height="15"><path d="M5.5 1L.5 14" stroke="#333" /></svg>
        </div>
      </div>
    </main>

    <footer class="status">
      <button class="ratio">比例 <code>1:100</code><i class="tri blk"></i></button>
      <pre class="coords">988,   41791, 0</pre>
      <button v-for="[i, on] in toggles" :key="i" class="tg" :class="{ on }" :aria-label="i"><Icon :n="i" /></button>
      <span class="grow"></span>
      <button class="tx">模型</button>
      <button class="tg" aria-label="布局"><Icon n="sMod" /></button>
      <button class="tg" aria-label="快速查看"><Icon n="sLay" /></button>
      <span class="gap"></span>
      <button class="ann"><Icon n="sAnn" /><code>1:1</code><i class="tri blk"></i></button>
      <button class="tg" aria-label="注释可见性"><Icon n="sAnnS" /></button>
      <button class="tg" aria-label="自动添加比例"><Icon n="sAnnG" /></button>
      <span class="gap sm"></span>
      <button class="tg" aria-label="工作空间"><Icon n="sGear" /></button>
      <button class="tg" aria-label="锁定"><Icon n="sLock" /></button>
      <button class="tg" aria-label="硬件加速"><Icon n="sBall" /></button>
      <button class="tx on">编组</button>
      <button class="tx">基线</button>
      <button class="tx">填充</button>
      <button class="tx">加粗</button>
      <button class="tx">动态标注</button>
      <span class="gap sm"></span>
      <button class="dark" aria-label="隔离对象"><Icon n="bulbY" /></button>
      <span class="gap sm"></span>
      <button class="thin" aria-label="菜单"><i class="tri blk"></i></button>
      <button class="tg" aria-label="全屏显示"><Icon n="sFull" /></button>
      <svg class="size" width="12" height="14"><path d="M9 3h2v2H9zM5 7h2v2H5zM9 7h2v2H9zM1 11h2v2H1zM5 11h2v2H5zM9 11h2v2H9z" fill="#eee" /></svg>
    </footer>
  </div>
</template>

<style>
html, body { margin: 0; background: #696969; }
</style>

<style scoped>
* { box-sizing: border-box; }
.app {
  min-height: 100vh; display: flex; flex-direction: column; overflow: hidden;
  border: 1px solid #2c76a3; background: #696969; color: #333;
  font: 12px/16px "Noto Sans", "Noto Sans CJK SC", sans-serif;
}
.defs { position: absolute; }
button { font: inherit; color: inherit; background: none; border: 0; padding: 0; margin: 0; display: flex; align-items: center; justify-content: center; white-space: pre; }
svg { display: block; flex: none; overflow: visible; }
.tri { width: 0; height: 0; border: 2px solid transparent; border-top: 3px solid #444; border-bottom: 0; flex: none; }
.tri.lg { border-width: 4px 4px 0; }
.tri.blk { border-width: 5px 4px 0; border-top-color: #000; }
.tri.white { border-top-color: #fff; }

.titlebar { position: relative; display: flex; height: 31px; background: #fff; color: #000; }
.titlebar h1 { flex: 1; margin: 0; padding-right: 22px; text-align: center; font-size: 12px; font-weight: 400; line-height: 30px; }
.wctl { display: flex; }
.wctl button { width: 46px; height: 28px; }
.appbtn { position: absolute; left: 0; top: 7px; width: 41px; height: 41px; z-index: 2; gap: 3px; border: 1px solid #000; background: linear-gradient(#b4b4b4, #6e6e6e); }
.appbtn .tri { border-width: 4px 4px 0; border-top-color: #333b44; }

.menubar { display: flex; height: 20px; padding-left: 45px; background: #404040; color: #fff; align-items: flex-end; }
.menubar button { height: 17px; padding: 0 10px; }
.menubar .on { background: linear-gradient(#d0d0d0, #fff); color: #222; border-radius: 2px 2px 0 0; }
.menubar .mini { gap: 4px; padding: 0 24px; }

.ribbon { display: grid; grid-template-columns: 212fr 227fr 214fr 118fr 80fr 162fr 68fr 100fr 76fr; height: 99px; padding-right: 3px; background: #fff; }
.panel { display: flex; flex-direction: column; border-right: 1px solid #999; min-width: 0; padding: 0 1px; }
.panel > footer { display: flex; align-items: center; justify-content: center; gap: 6px; height: 18px; margin-bottom: 1px; background: #ececec; border-top: 1px solid #d4d4d4; position: relative; }
.panel .corner { position: absolute; right: 4px; top: 7px; }
.body { flex: 1; display: flex; padding: 6px 2px 3px; min-width: 0; }
.body.props { padding-left: 3px; }
.big { flex-direction: column; justify-content: flex-start; width: 40px; white-space: nowrap; flex: 0 0 40px; }
.big span { line-height: 18px; margin-top: 2px; }
.big .tri { margin-top: 4px; }
.big + .big + .big { flex-basis: 42px; }
.col { display: flex; flex-direction: column; gap: 2px; }
.col.end { margin-left: auto; }
.col.inset { margin-right: 3px; }
.col.wide { flex: 1; min-width: 0; }
.big.note { flex-basis: 46px; margin-right: 4px; }
.big.util { flex-basis: 70px; }
.big.clipb { flex-basis: 46px; }
.sq, .split { height: 22px; border: 1px solid #c9c9c9; background: linear-gradient(#fdfdfd, #ededed); }
.sq { width: 24px; }
.sq.on { background: #a9cff5; border-color: #1c67b8; }
.split { display: flex; width: 36px; }
.split button { flex: 1; }
.split button + button { flex: 0 0 12px; border-left: 1px solid #d4d4d4; }
.flat { height: 22px; gap: 5px; justify-content: flex-start; }
.flat .far { margin-left: 6px; }
.modgrid { display: grid; grid-template-columns: 59px 59px 71px 24px; gap: 2px 0; padding-left: 4px; align-content: start; }
.laytools { display: flex; justify-content: space-between; height: 22px; }
.seg { display: flex; }
.seg .sq + .sq { border-left: 0; }
.combo { flex: 1; display: flex; align-items: center; gap: 3px; height: 22px; min-width: 0; padding: 0 3px 0 2px; border: 1px solid #c9c9c9; background: linear-gradient(#fefefe, #efefef); }
.combo .tri { margin-left: auto; }
select { appearance: none; border: 0; background: none; font: inherit; color: inherit; padding: 0; margin: 0; outline: 0; }
select.r { padding-right: 5px; }
.swatch { width: 14px; height: 14px; border: 1px solid #111; background: #fff; }
.prow { display: flex; align-items: center; gap: 2px; height: 22px; }
.big-s { width: 16px; height: 16px; }
.combo hr { flex: 1; border: 0; border-top: 1px solid #000; margin: 0; }
.combo hr.in { margin-left: 5px; }

.work { flex: 1; display: flex; gap: 5px; padding: 6px 1px 2px 0; }
.palette { flex: 0 0 103px; display: flex; flex-direction: column; color: #000; }
.palette header { position: relative; height: 30px; margin-bottom: -6px; padding: 4px 0 0 12px; background: #a0a0a0; border-radius: 4px 4px 0 0; }
.palette .grip { position: absolute; left: 3px; top: 3px; width: 4px; height: 12px; }
.palette ul { position: relative; flex: 1; margin: 0; padding: 6px 0; list-style: none; background: #f0f0f0; border-radius: 4px; }
.palette li { display: flex; align-items: center; height: 18px; padding-left: 8px; gap: 15px; }
.palette li::before { content: ""; border: 4px solid transparent; border-left: 5px solid #2f6398; border-right: 0; }
.grip { background: conic-gradient(#222 25%, transparent 0) 0 0 / 2px 2px; }

.doc { flex: 1; display: flex; flex-direction: column; min-width: 0; border: 1px solid #aaa; border-right-color: #fff; border-bottom: 0; }
.canvas { position: relative; flex: 1; background: #000; overflow: hidden; }
.viewlabel { position: absolute; left: 3px; top: 4px; color: #ccc; line-height: 18px; }
.tb { position: absolute; display: flex; height: 24px; border: 1px solid #444; background: #ebebeb; }
.tb > .grip { width: 8px; border: 2px solid #606060; background-color: #808080; }
.tbi { display: flex; align-items: center; margin-left: -1px; }
.tbi button { width: 23px; height: 22px; }
.sep { width: 1px; height: 18px; margin: 0 2px 0 3px; background: #888; }
.tb .x { width: 8px; background: #5c5c5c; align-items: flex-start; padding-top: 3px; }
.mark { position: absolute; top: 382px; transform: rotate(-36deg); transform-origin: 0 100%; font-size: 25px; line-height: 32px; white-space: nowrap; color: rgba(120, 120, 120, .6); pointer-events: none; }
.docctl { position: absolute; top: 10px; right: 10px; display: flex; gap: 9px; }
.cube { position: absolute; top: 47px; right: 23px; width: 120px; height: 120px; border: 12px solid #2a2a2a; border-radius: 50%; }
.cube b { position: absolute; font-size: 19px; line-height: 20px; font-weight: 400; color: #999; }
.cube .n { left: 38px; top: -18px; }
.cube .s { left: 38px; top: 96px; }
.cube .w { left: -18px; top: 39px; }
.cube .e { right: -17px; top: 39px; }
.face { position: absolute; left: 22px; top: 20px; width: 52px; height: 53px; background: #a0a0a0; border: 1px solid #777; color: #4a4c54; font: 28px/32px "Noto Sans CJK SC", sans-serif; font-weight: 300; }
.face span { width: 32px; height: 32px; background: #979aa2; }
.wcs { position: absolute; right: 59px; top: 194px; width: 48px; height: 18px; border: 1px solid #6b6b75; border-radius: 4px; background: #8a8a96; color: #333; font-size: 11px; }
.navbar { position: absolute; right: 4px; top: 236px; width: 32px; padding: 2px 4px; border: 1px solid #505050; border-radius: 3px; background: #484848; display: flex; flex-direction: column; gap: 3px; }
.navbar button { flex-direction: column; gap: 6px; }
.navbar hr { width: 100%; margin: 1px 0; border: 0; border-top: 1px solid #5a5a5a; }
.navbar .tri { border-top-color: #222; }
.navbar .dot { align-self: flex-end; width: 8px; height: 8px; margin-bottom: 4px; border-radius: 50%; background: #2b2b2b; color: #777; font-size: 8px; line-height: 8px; }
.navbar .bot { margin: 4px 0 0; }
.ucs { position: absolute; left: 12px; bottom: 13px; }
.cmd { position: absolute; left: 229px; right: 231px; bottom: 1px; height: 27px; display: flex; align-items: stretch; background: linear-gradient(#444, #606060); border: 1px solid #555; }
.cmd > .grip { width: 6px; margin: 4px 1px 4px 3px; background: radial-gradient(#999 1px, transparent 1px) 0 0 / 3px 3px; }
.cmd > button { width: 18px; margin-right: 3px; }
.line { flex: 1; display: flex; align-items: center; gap: 4px; background: #b2b2b2; padding: 0 4px; min-width: 0; }
.line input { flex: 1; min-width: 0; border: 0; background: none; padding: 0 0 0 4px; font: italic 13px/20px "Noto Sans", "Noto Sans CJK SC", sans-serif; outline: 0; }
.line input::placeholder { color: #777; }
.up { border: 3px solid transparent; border-bottom: 4px solid #222; border-top: 0; }
.activate { position: absolute; right: 47px; bottom: -1px; color: #858585; }
.activate p { margin: 0; font-size: 15px; line-height: 20px; }
.activate p:first-child { font-size: 20px; line-height: 28px; }

.sheetbar { display: flex; align-items: center; height: 15px; background: #f0f0f0; color: #000; }
.sheetbar .nav { width: 14px; height: 14px; border: 1px solid #aaa; background: #fafafa; }
.sheetbar button:not(.nav) { padding: 0 4px 0 6px; line-height: 15px; height: 15px; }
.sheetbar button.model:not(.nav) { color: #fff; background: #000; padding: 0 10px; clip-path: polygon(0 0, 100% 0, 88% 100%, 12% 100%); }

.status { display: flex; align-items: stretch; height: 22px; background: linear-gradient(#777, #999); border-top: 1px solid #222; color: #000; padding-left: 4px; }
.status button { background: linear-gradient(#ddd, #a4a4a4); border-left: 1px solid #777; }
.status .on { background: linear-gradient(#f2fbff, #8ccbe0); }
.status .ratio { width: 81px; gap: 4px; background: linear-gradient(#aaa, #c8c8c8); }
.status code { font: 11px/16px "Liberation Mono", monospace; }
.coords { margin: 0; width: 147px; padding-left: 8px; font: 10px/24px "Liberation Mono", monospace; background: linear-gradient(#777, #aaa); }
.tg { width: 22px; }
.grow { flex: 1; }
.gap { width: 18px; }
.gap.sm { width: 4px; }
.tx { padding: 0 2px 0 3px; }
.ann { width: 54px; gap: 2px; }
.status .dark { width: 26px; background: #666; border: 1px inset #999; }
.thin { width: 10px; }
.size { align-self: flex-end; margin: 0 1px 0 6px; }
</style>
